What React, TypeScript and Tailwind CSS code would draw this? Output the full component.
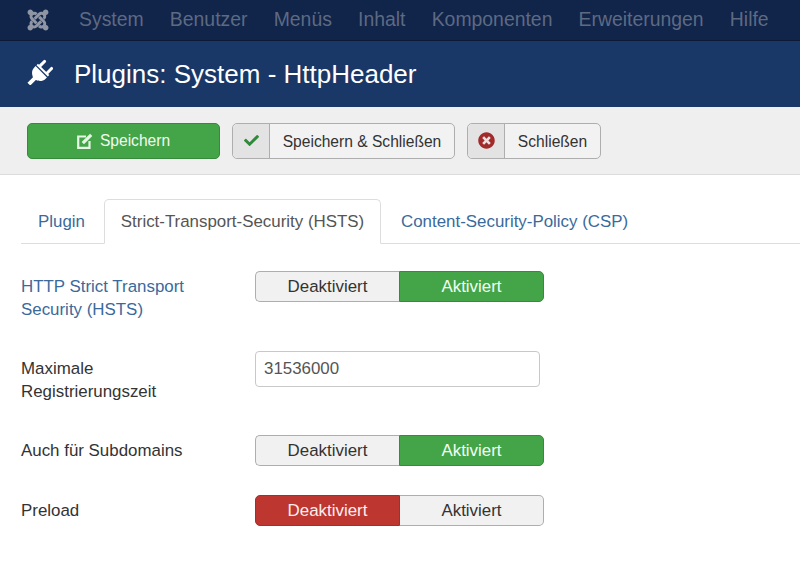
import React from "react";
import { FaCheck, FaJoomla, FaTimesCircle } from "react-icons/fa";

const menu = ["System", "Benutzer", "Menüs", "Inhalt", "Komponenten", "Erweiterungen", "Hilfe"];

function PlugIcon() {
  return (
    <svg viewBox="0 0 26 27" className="w-[26px] h-[27px] mr-[21px] mb-[5px] fill-white">
      <g transform="translate(12 16) rotate(45)">
        <rect x="-6.5" y="-14.3" width="3" height="9" rx="1.2" />
        <rect x="3.5" y="-14.3" width="3" height="9" rx="1.2" />
        <rect x="-8" y="-6.5" width="16" height="2" />
        <path d="M-8 -3.2H8V-1C8 3 4.5 5.5 2 6.5V14.3H-2V6.5C-4.5 5.5 -8 3 -8 -1Z" />
      </g>
    </svg>
  );
}

function EditIcon() {
  return (
    <svg viewBox="0 0 16 16" className="w-[16px] h-[16px]" fill="none" stroke="currentColor">
      <path d="M9 3.5H1.2V14.8H12.5V8" strokeWidth="2.2" />
      <path d="M5.8 10.2L14.2 1.8" strokeWidth="3.2" />
    </svg>
  );
}

function Toggle({ value }: { value: "on" | "off" }) {
  return (
    <div className="flex h-[31px] w-[289px] text-[16.9px] leading-[29px]">
      <div
        className={`text-center rounded-l-[5px] border ${
          value === "off"
            ? "w-[145px] bg-[#bd362f] border-[#a52e28] text-[#fdeeee]"
            : "w-[144px] bg-[#f1f1f1] border-[#aeaeae] border-r-0 text-[#333]"
        }`}
      >
        Deaktiviert
      </div>
      <div
        className={`text-center rounded-r-[5px] border flex-1 ${
          value === "on"
            ? "bg-[#43a548] border-[#37893b] text-[#f2fff2]"
            : "bg-[#f1f1f1] border-[#aeaeae] border-l-0 text-[#333]"
        }`}
      >
        Aktiviert
      </div>
    </div>
  );
}

function ToolButton({ icon, label, width }: { icon: React.ReactNode; label: string; width: string }) {
  return (
    <button className={`flex h-[36px] ${width} rounded-[5px] border border-[#aeaeae] bg-[#f2f2f2] text-[#333] text-[15.6px]`}>
      <span className="flex w-[37px] h-full items-center justify-center bg-[#e3e3e3] border-r border-[#aeaeae] rounded-l-[5px]">
        {icon}
      </span>
      <span className="flex-1 text-center leading-[35px]">{label}</span>
    </button>
  );
}

export default function App() {
  return (
    <div className="w-[800px] h-[566px] overflow-hidden bg-white font-['Liberation_Sans',Arial,sans-serif]">
      <nav className="flex items-center h-[41px] bg-[#11244a] border-b border-[#0c1a36] text-[19.4px] text-[#5d6a82] pl-[26px]">
        <FaJoomla className="text-[#8f95a3] text-[24px] mr-[29px]" />
        <div className="flex gap-[26.2px]">
          {menu.map((m) => (
            <span key={m}>{m}</span>
          ))}
        </div>
      </nav>

      <header className="flex items-center h-[66px] bg-[#1a3867] text-white pl-[27px]">
        <PlugIcon />
        <h1 className="text-[26px] mt-[1px]">Plugins: System - HttpHeader</h1>
      </header>

      <div className="flex items-center gap-[12px] h-[68px] pl-[27px] bg-[#efefef] border-b border-[#dcdcdc]">
        <button className="flex items-center justify-center gap-[7px] w-[193px] h-[36px] rounded-[5px] bg-[#43a548] border border-[#37893b] text-[#f0faf0] text-[15.6px]">
          <span className="text-[#e6f5e6]">
            <EditIcon />
          </span>
          <span className="mt-[1px]">Speichern</span>
        </button>
        <ToolButton icon={<FaCheck className="text-[#2f8a3b] text-[15px]" />} label="Speichern & Schließen" width="w-[223px]" />
        <ToolButton icon={<FaTimesCircle className="text-[#a32a2a] text-[17px]" />} label="Schließen" width="w-[134px]" />
      </div>

      <div className="pt-[24px]">
        <div className="flex h-[45px] ml-[21px] border-b border-[#ddd] text-[16.9px]">
          <div className="w-[83px] pl-[17px] leading-[46px] text-[#3a6a9c]">Plugin</div>
          <div className="h-[45px] w-[277px] text-center leading-[44px] text-[#555] bg-white border border-[#ddd] border-b-white rounded-t-[5px]">
            Strict-Transport-Security (HSTS)
          </div>
          <div className="pl-[20px] leading-[46px] text-[#3a6a9c]">Content-Security-Policy (CSP)</div>
        </div>

        <div className="pl-[21px] pt-[27px] text-[16.9px] text-[#333] leading-[23px]">
          <div className="flex h-[80px]">
            <div className="w-[234px] pt-[4px] text-[#3a6a9c]">
              HTTP Strict Transport
              <br />
              Security (HSTS)
            </div>
            <Toggle value="on" />
          </div>
          <div className="flex h-[84px]">
            <div className="w-[234px] pt-[6px]">
              Maximale
              <br />
              Registrierungszeit
            </div>
            <div className="w-[285px] h-[36px] px-[8px] rounded-[4px] border border-[#c8c8c8] text-[#555] text-[16.9px] leading-[34px]">
              31536000
            </div>
          </div>
          <div className="flex h-[60px]">
            <div className="w-[234px] pt-[4px]">Auch für Subdomains</div>
            <Toggle value="on" />
          </div>
          <div className="flex">
            <div className="w-[234px] pt-[4px]">Preload</div>
            <Toggle value="off" />
          </div>
        </div>
      </div>
    </div>
  );
}
